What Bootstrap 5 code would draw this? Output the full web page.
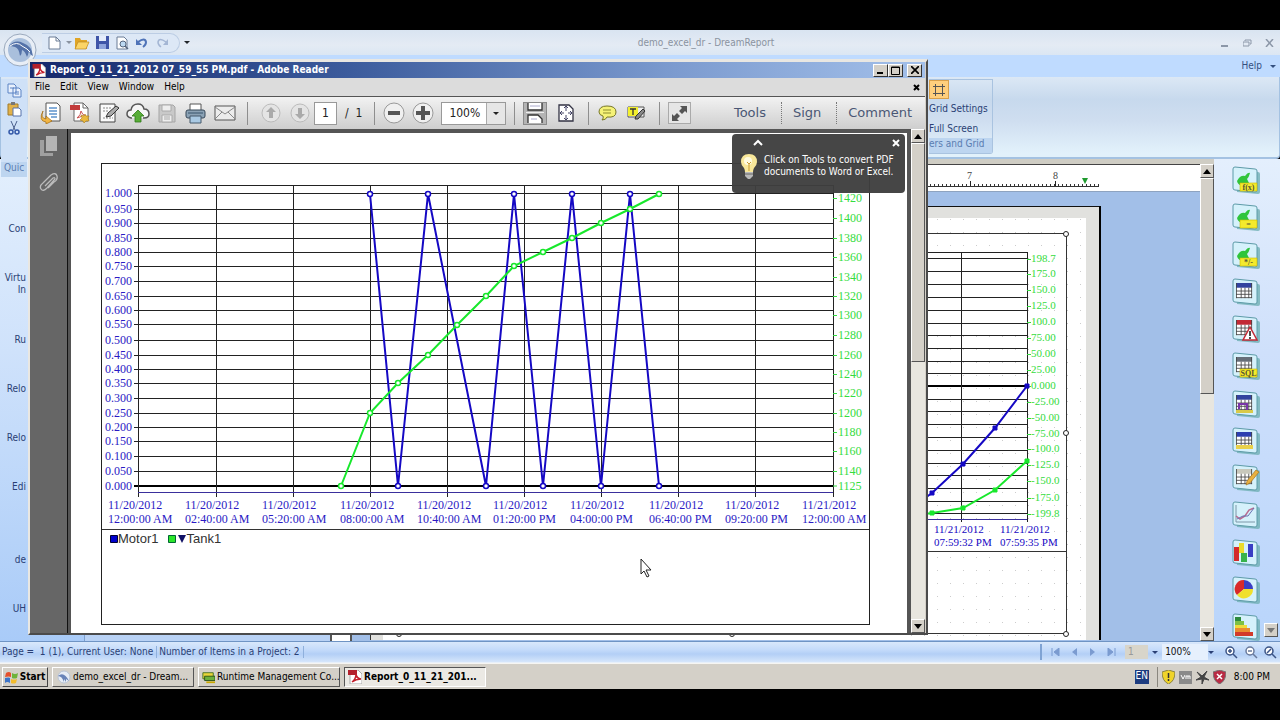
<!DOCTYPE html>
<html lang="en">
<head>
<meta charset="utf-8">
<meta name="viewport" content="width=device-width, initial-scale=1">
<title>demo_excel_dr - DreamReport</title>
<link rel="stylesheet" href="https://cdn.jsdelivr.net/npm/bootstrap@5.3.0/dist/css/bootstrap.min.css">
<style>
body{background:#000;font-family:"DejaVu Sans Condensed","DejaVu Sans",sans-serif;font-size:10px;line-height:12px;color:#2a3f74;padding:30px 0 31px;min-height:100vh}
button,input,select{font:inherit;color:inherit}
.bare{border:0;background:none;padding:0;display:inline-flex;align-items:center;justify-content:center}
svg{display:block;flex-shrink:0}
svg text{font-family:"Liberation Serif",serif}
a{color:inherit;text-decoration:none}

/* DreamReport shell */
.app-title{height:25px;background:linear-gradient(#d9e4f1,#e4ebf4 60%,#dbe6f3);color:#8a93a0;padding-left:42px}
.orb{left:3px;top:3px;z-index:1}
.qat{background:#dde8f6;border:1px solid #bccde4;border-left:0;border-radius:0 11px 11px 0;height:20px;width:138px}
.qat button{width:20px}
.app-tabs{height:22px;background:#bfdbff;color:#34507f;padding-right:4px}
.ribbon{height:82px;background:linear-gradient(#dce8f5,#c7d9ed 28%,#cfdef0 55%,#e2f1fb 95%);border:1px solid #a4c2e2;border-width:0 1px 2px;border-radius:0 0 4px 4px}
.ribbon-group{border:1px solid #a9c3e0;border-left:0;border-radius:0 0 3px 0;height:75px;margin-top:2px;white-space:nowrap}
.ribbon-cap{background:#bdd5f0;color:#5a7db0;height:15px}
.ribbon-behind{width:902px}
.left-group{width:26px;background:#cfe1f7;height:98px;margin-top:2px;z-index:1}
.grid-on{background:#ffcf7d;border:1px solid #d9a04a;width:20px;height:19px}

.nav-pane{width:85px;background:linear-gradient(#e3effd,#cfe2fb 40%,#a9cbf8);border-right:1px solid #7ea0cf}
.nav-pane a{width:26px;height:49px;overflow:hidden;white-space:nowrap}
.nav-pane a.two-line{height:70px}
.nav-pane a:last-child{height:auto}
.tree-pane{width:245px;background:#b9d2f5}
.designer{background:#a2bfe8;border-top:5px solid #cfcdc4}
.ruler{height:28px;background:#fff;border-top:1px solid #444;border-bottom:1px solid #8ea3c0}
.vruler{width:22px;background:#fff;border:1px solid #555;border-width:0 2px}
.sheet{margin-top:14px;margin-left:18px;width:731px}
.toolbox{width:67px;background:linear-gradient(#e4effd,#cfe0fb 40%,#b9d5fb)}
.toolbox .tools{padding:7px 0 0 18px}
.sb{width:14px;background:#e8e6df}
.sb-btn{width:14px;height:14px;background:#d4d0c8;border:1px solid;border-color:#fff #555 #555 #fff}
.sb-thumb{background:#d4d0c8;border:1px solid;border-color:#fff #555 #555 #fff}

.status{height:22px;background:linear-gradient(#d9e8fb,#c3dafa 40%,#b3cff6 60%,#d6e6fb);border-top:1px solid #6f94c4;border-bottom:1px solid #e8f0fa}
.status .cell{border-right:1px solid #8fb0dc;padding:0 3px 0 2px;white-space:pre}
.status-nav{width:240px;border-left:2px solid #7fa3d4}
.page-pick{width:24px;height:14px;background:#d8d5ca;color:#999;border:0;padding:0 0 0 3px}
.zoom-pick{width:48px;height:16px;background:#e6f0fd;border:0;color:#111;padding:0 0 0 3px}
select{appearance:none;border-radius:0}
.caret{width:0;height:0;border:3px solid transparent;border-top-color:currentColor;border-bottom:0}

/* Taskbar */
.taskbar{height:26px;background:#d4d0c8;border-top:1px solid #f6f5f2;color:#000;padding:2px 2px 1px}
.task{width:142px;height:20px;border:1px solid;border-color:#fff #555 #555 #fff;background:#d4d0c8;padding:0 3px;white-space:nowrap;text-align:left;display:flex;align-items:center;gap:2px}
.task.on{border-color:#555 #fff #fff #555;background:#ebe9e4;font-weight:700}
.start{width:46px;height:20px;border:1px solid;border-color:#fff #444 #444 #fff;background:#d4d0c8;font-weight:700;padding:0 2px;gap:2px}
.lang{background:#1c3c80;color:#fff;width:14px;height:14px;text-align:center}
.tray{border-left:1px solid #8a877f;height:20px}

/* Reader window */
.reader{left:28px;right:352px;top:29px;z-index:5;background:#d4d0c8;border:2px solid;border-color:#e9e7e2 #4b4b4b #4b4b4b #e9e7e2;border-top-width:3px;padding-right:1px;min-width:640px;color:#000}
.r-title{height:16px;background:linear-gradient(90deg,#15286b,#3c5c9d 36%,#7c9bcf 72%,#a3c0ea);color:#fff;font-weight:700;padding:0 3px 0 2px}
.win-btn{width:15px;height:13px;background:#d4d0c8;border:1px solid;border-color:#fff #333 #333 #fff;padding:0}
.r-menu{height:18px;background:#dcdcdc;padding:0 5px;gap:10px}
.r-tools{height:33px;background:linear-gradient(#f2f2f2,#cecece);border-top:1px solid #555;padding-left:6px;padding-right:13px;color:#222}
.r-tools .ic{width:29px;height:28px}
.vsep{width:1px;height:23px;background:#8e8e8e}
.pg{width:23px;height:23px;border:1px solid #999;background:#fff;text-align:center;padding:0;font-size:12px}
.zm{width:65px;height:23px;border:1px solid #999;background:#fff;font-size:12px;padding:0 0 0 7px;border-radius:0}
.zm-arrow{right:1px;top:1px;width:19px;height:21px;background:#e6e6e6;border-left:1px solid #aaa;pointer-events:none}
.fit{width:24px;height:23px;background:#b4b4b4;border:1px solid #8a8a8a}
.full{width:23px;height:22px;border:1px solid #aaa;background:#e6e6e6}
.panel-link{font-family:"DejaVu Sans",sans-serif;font-size:13px;color:#4a5775;gap:11px}
.dotsep{height:22px;border-left:1px dotted #777}
.r-side{width:38px;background:#666;border-right:1px solid #111;padding-top:7px}
.r-doc{background:#555;padding:4px 4px 0 3px}
.paper{background:#fff;padding:30px 37px 8px 30px}
.frame{border:1px solid #222;width:100%}
.legend-row{height:95px;border-top:1px solid #333;padding:2px 0 0 8px;font-family:"Liberation Sans",sans-serif;font-size:13px;line-height:14px;color:#333}
.tip{right:21px;top:72px;width:173px;height:59px;background:rgba(62,62,62,.96);border-radius:4px;color:#fff;z-index:2;padding:20px 0 0 9px;gap:7px;white-space:nowrap}
.tip-up{left:21px;top:5px}.tip-x{right:5px;top:5px}
.pointer{left:640px;top:528px;z-index:6}
</style>
</head>
<body class="d-flex flex-column">
<svg width="0" height="0" class="position-absolute" aria-hidden="true">
  <symbol id="tile" viewBox="0 0 28 28"><path d="M4 4 26 6q2 0 2 2v18q0 2-2 2L5 26z" fill="#6fb0b4" opacity=".8"/><path d="M1 3q0-2 2-2l20 2q2 0 2 2v19q0 2-2 2L3 24q-2 0-2-2z" fill="#d5f1fb" stroke="#5d9ba8"/></symbol>
  <symbol id="grid" viewBox="0 0 18 18"><path d="M0 0h17v16H0z" fill="#fff"/><path d="M0 0h17v5H0z" fill="currentColor"/><path d="M.5 0v16M5.500 5v11M9.500 5v11M13.500 5v11M16.500 0v16M0 8.500h17M0 12h17M0 15.500h17" stroke="#444" stroke-width=".9" fill="none"/></symbol>
  <symbol id="leaf" viewBox="0 0 28 28"><path d="M5 15q3-6 8-5 3-4 5-3-1 4-3 6l2 4-6 2q-5 1-6-4z" fill="#2fc53c"/></symbol>
  <symbol id="pdf" viewBox="0 0 14 14"><path d="M2 0h8l4 4v10H2z" fill="#fff" stroke="#a9a9a9"/><path d="M0 0h9v5H0z" fill="#b3202c"/><path d="M4 12q4-3 4-8 1 5 5 5-5 0-9 3z" fill="none" stroke="#c3202c" stroke-width="1.500"/></symbol>
  <symbol id="up" viewBox="0 0 8 5"><path d="M0 5h8L4 0z"/></symbol>
  <symbol id="down" viewBox="0 0 8 5"><path d="M0 0h8L4 5z"/></symbol>
</svg>

<main class="position-relative d-flex flex-column flex-grow-1">
  <button class="bare orb position-absolute" aria-label="Application menu"><svg width="36" height="36" viewBox="0 0 36 36"><circle cx="17" cy="17" r="16" fill="#e8eef6" stroke="#9aa9bd"/><circle cx="17" cy="17" r="12" fill="#a9bfdc"/><path d="M6 13q6-7 14-3 9 3 10 13-3-1-4-5-1 4-2 6-2-6-5-7 0 4-2 6-1-8-5-9-3-1-6-1z" fill="#5472a8"/><path d="M7 13q7-5 12 0 6 3 8 6" stroke="#fff" fill="none"/></svg></button>
  <header class="app-title d-flex align-items-center">
    <div class="qat d-flex align-items-center">
      <button class="bare" aria-label="New" style="width:24px"><svg width="13" height="14" viewBox="0 0 13 14"><path d="M1 1h7l4 4v8H1z" fill="#fff" stroke="#6b7c96"/><path d="M8 1v4h4" fill="none" stroke="#6b7c96"/></svg></button>
      <span class="caret"></span>
      <button class="bare" aria-label="Open"><svg width="16" height="14" viewBox="0 0 16 14"><path d="M1 2h5l1 2h6v9H1z" fill="#e0a526"/><path d="M4 6h11l-3 7H1z" fill="#fbd466" stroke="#b98620" stroke-width=".7"/></svg></button>
      <button class="bare" aria-label="Save"><svg width="13" height="13" viewBox="0 0 13 13"><path d="M0 0h13v13H0z" fill="#3f55a8"/><path d="M3 0h7v5H3z" fill="#e5edfb"/><path d="M3 8h7v5H3z" fill="#8fa4dc"/></svg></button>
      <button class="bare" aria-label="Preview"><svg width="13" height="14" viewBox="0 0 13 14"><path d="M1 1h7l3 3v9H1z" fill="#fff" stroke="#6b7c96"/><circle cx="7" cy="8" r="3" fill="#bcd9f2" stroke="#55657d"/><path d="m9 10 3 3" stroke="#55657d" stroke-width="1.500"/></svg></button>
      <button class="bare" aria-label="Undo"><svg width="12" height="11" viewBox="0 0 12 11"><path d="M2 5q7-5 8 0 0 3-3 5" stroke="#4f73b8" stroke-width="2" fill="none"/><path d="M0 2v6h6z" fill="#4f73b8"/></svg></button>
      <button class="bare" aria-label="Redo"><svg width="12" height="11" viewBox="0 0 12 11"><path d="M10 5q-7-5-8 0 0 3 3 5" stroke="#a4b6d4" stroke-width="1.500" fill="none"/><path d="M12 2v6H7z" fill="#a4b6d4"/></svg></button>
    </div>
    <span class="caret ms-1 text-dark"></span>
    <span class="flex-grow-1 text-center ps-2">demo_excel_dr - DreamReport</span>
    <button class="bare" aria-label="Minimize" style="width:22px"><svg width="8" height="8"><path d="M0 7h7" stroke="#8c97a8" stroke-width="2"/></svg></button>
    <button class="bare" aria-label="Restore" style="width:22px"><svg width="9" height="8"><path d="M2 2V1h6v4H7M0 3h6v4H0z" fill="none" stroke="#8c97a8"/></svg></button>
    <button class="bare" aria-label="Close" style="width:22px"><svg width="9" height="8"><path d="m1 0 7 8M8 0 1 8" stroke="#8c97a8" stroke-width="1.500"/></svg></button>
  </header>
  <nav class="app-tabs d-flex align-items-center justify-content-end gap-2"><a href="#">Help</a><span class="caret"></span></nav>
  <div class="ribbon d-flex">
    <div class="left-group d-flex flex-column align-items-center gap-1 pt-1 position-relative flex-shrink-0">
      <button class="bare" aria-label="Copy"><svg width="15" height="15" viewBox="0 0 15 15"><path d="M1 1h6l2 2v7H1zM6 5h6l2 2v7H6z" fill="#e8f0fc" stroke="#5b83c4"/><path d="M3 5h4M8 9h4M8 11h4" stroke="#5b83c4"/></svg></button>
      <button class="bare" aria-label="Paste"><svg width="15" height="15" viewBox="0 0 15 15"><path d="M1 2h10v11H1z" fill="#e2b24a" stroke="#a07a2a"/><path d="M4 0h4v3H4z" fill="#777"/><path d="M6 6h6l2 2v6H6z" fill="#fff" stroke="#5673ab"/></svg></button>
      <button class="bare" aria-label="Cut"><svg width="12" height="14" viewBox="0 0 12 14"><path d="m3 0 4 9M9 0 5 9" stroke="#4a5f8c"/><circle cx="3" cy="11" r="2" fill="none" stroke="#3358a8" stroke-width="1.500"/><circle cx="9" cy="11" r="2" fill="none" stroke="#3358a8" stroke-width="1.500"/></svg></button>
      <span class="ribbon-cap mt-auto w-100 text-center">Quic</span>
    </div>
    <div class="ribbon-behind flex-shrink-0"></div>
    <div class="ribbon-group d-flex flex-column align-items-start flex-shrink-0">
      <button class="bare grid-on" aria-label="Show grid"><svg width="12" height="12" viewBox="0 0 12 12"><path d="M2.500 0v12M9.500 0v12M0 2.500h12M0 9.500h12" stroke="#555"/></svg></button>
      <button class="bare mt-1">Grid Settings</button>
      <button class="bare mt-2">Full Screen</button>
      <span class="ribbon-cap mt-auto w-100 pe-2">ers and Grid</span>
    </div>
  </div>

  <div class="d-flex flex-grow-1">
    <nav class="nav-pane d-flex flex-column pt-5 flex-shrink-0">
      <a href="#" class="text-end pt-3">Con</a>
      <a href="#" class="text-end two-line pt-3">Virtu<br>In</a>
      <a href="#" class="text-end pt-2">Ru</a>
      <a href="#" class="text-end pt-2">Relo</a>
      <a href="#" class="text-end pt-2">Relo</a>
      <a href="#" class="text-end pt-2">Edi</a>
      <a href="#" class="text-end pt-2 mt-4">de</a>
      <a href="#" class="text-end pt-2">UH</a>
    </nav>
    <div class="tree-pane flex-shrink-0"></div>
    <section class="designer flex-grow-1 d-flex">
      <div class="flex-grow-1 d-flex flex-column">
        <div class="ruler"><svg id="ruler" width="870" height="26" viewBox="330 166 870 26"></svg></div>
        <div class="d-flex flex-grow-1">
          <div class="vruler flex-shrink-0"></div>
          <div class="sheet"><svg id="design" width="731" height="434" viewBox="370 206 731 434" role="img" aria-label="Report page in design view"></svg></div>
        </div>
      </div>
      <div class="sb d-flex flex-column flex-shrink-0">
        <button class="bare sb-btn" aria-label="Scroll up"><svg width="8" height="5"><use href="#up"/></svg></button>
        <div class="sb-thumb" style="height:216px"></div>
        <button class="bare sb-btn mt-auto" aria-label="Scroll down"><svg width="8" height="5"><use href="#down"/></svg></button>
      </div>
    </section>
    <aside class="toolbox d-flex flex-shrink-0">
      <div class="tools d-flex flex-column justify-content-between" id="tools"></div>
      <button class="bare sb-btn mb-1 ms-1 align-self-end" aria-label="More tools"><svg width="8" height="5"><use href="#down" fill="#777"/></svg></button>
    </aside>
  </div>

  <footer class="status d-flex align-items-center">
    <span class="cell">Page =  1 (1), Current User: None</span>
    <span class="cell">Number of Items in a Project: 2</span>
    <div class="status-nav ms-auto d-flex align-items-center ps-1">
      <button class="bare" aria-label="First" style="width:20px"><svg width="9" height="8"><path d="M1 0v8M8 0v8L3 4z" stroke="#7b9bd0" fill="#7b9bd0"/></svg></button>
      <button class="bare" aria-label="Previous" style="width:20px"><svg width="6" height="8"><path d="M5 0v8L0 4z" fill="#7b9bd0"/></svg></button>
      <button class="bare" aria-label="Next" style="width:18px"><svg width="6" height="8"><path d="M0 0v8l5-4z" fill="#7b9bd0"/></svg></button>
      <button class="bare" aria-label="Last" style="width:20px"><svg width="9" height="8"><path d="M8 0v8M1 0v8l5-4z" stroke="#7b9bd0" fill="#7b9bd0"/></svg></button>
      <select class="page-pick ms-1" aria-label="Page number"><option>1</option></select>
      <span class="caret ms-1 me-1"></span>
      <select class="zoom-pick" aria-label="Design zoom"><option>100%</option></select>
      <span class="caret me-2"></span>
      <button class="bare" aria-label="Zoom in" style="width:20px"><svg width="13" height="13"><circle cx="5" cy="5" r="4" fill="#fff" stroke="#3b5486" stroke-width="1.500"/><path d="M3 5h4M5 3v4M8 8l4 4" stroke="#3b5486" stroke-width="1.500"/></svg></button>
      <button class="bare" aria-label="Zoom out" style="width:20px"><svg width="13" height="13"><circle cx="5" cy="5" r="4" fill="#fff" stroke="#68799c" stroke-width="1.500"/><path d="M3 5h4M8 8l4 4" stroke="#68799c" stroke-width="1.500"/></svg></button>
      <button class="bare" aria-label="Fit" style="width:20px"><svg width="13" height="13"><circle cx="5" cy="5" r="4" fill="#fff" stroke="#3b5486" stroke-width="1.500"/><path d="m3 7 4-4M8 8l4 4" stroke="#3b5486" stroke-width="1.500"/></svg></button>
    </div>
  </footer>

  <section class="reader position-absolute">
    <div class="r-title d-flex align-items-center">
      <svg width="14" height="13"><use href="#pdf"/></svg><span class="ps-1">Report_0_11_21_2012 07_59_55 PM.pdf - Adobe Reader</span>
      <button class="bare win-btn ms-auto" aria-label="Minimize"><svg width="8" height="8"><path d="M0 7h6" stroke="#000" stroke-width="2"/></svg></button>
      <button class="bare win-btn" aria-label="Maximize"><svg width="9" height="9"><path d="M.5 1h8v7.500h-8zM0 1.500h9" stroke="#000" fill="none"/></svg></button>
      <button class="bare win-btn ms-1" aria-label="Close"><svg width="8" height="8"><path d="m0 0 8 8M8 0 0 8" stroke="#000" stroke-width="1.700"/></svg></button>
    </div>
    <nav class="r-menu d-flex align-items-center">
      <a href="#">File</a><a href="#">Edit</a><a href="#">View</a><a href="#">Window</a><a href="#">Help</a>
      <button class="bare ms-auto" aria-label="Close document"><svg width="7" height="7"><path d="m1 1 5 5M6 1 1 6" stroke="#000" stroke-width="2"/></svg></button>
    </nav>
    <div class="r-tools d-flex align-items-center">
      <button class="bare ic" aria-label="Open"><svg width="22" height="22" viewBox="0 0 22 22"><path d="M6 1h11l3 3v15H6z" fill="#fff" stroke="#555"/><path d="M9 6h8M9 9h8M9 12h8M11 15h6" stroke="#5e93cb" stroke-width="1.500"/><path d="M3 9q-3 7 3 8v-3l6 5-6 3v-2Q-2 19 3 9z" fill="#f2b544" stroke="#a06a10" stroke-width=".7"/></svg></button>
      <button class="bare ic" aria-label="Create PDF"><svg width="22" height="22" viewBox="0 0 22 22"><path d="M5 1h9l5 5v13H5z" fill="#fff" stroke="#666"/><path d="M14 1v5h5" fill="none" stroke="#666"/><path d="M1 3h10v5H1z" fill="#c23b3b"/><path d="M8 16q4-3 4-7 1 4 5 5-5 0-9 2z" stroke="#c55" fill="none"/><path d="m16 12 1 2 3 0-1 2 1 3-3 0-2 2-1-2-3-1 2-2-1-3 3 1z" fill="#eab93e" stroke="#a87a1c" stroke-width=".6"/></svg></button>
      <button class="bare ic" aria-label="Edit"><svg width="22" height="22" viewBox="0 0 22 22"><path d="M2 2h15v18H2z" fill="#fafafa" stroke="#444"/><path d="M5 6h8M5 9h6M5 16h10" stroke="#888" stroke-dasharray="2 1"/><path d="m8 15 2-4L18 4l3 2-8 8z" fill="#aaa" stroke="#333"/></svg></button>
      <button class="bare ic" aria-label="Upload"><svg width="24" height="22" viewBox="0 0 24 22"><path d="M6 16H5q-4-1-4-4 0-4 4-4 1-6 7-6 5 0 6 5 5 0 5 5 0 4-5 4h-1" fill="#f6f6f6" stroke="#555" stroke-width="1.500"/><path d="m12 8 6 6h-3v6H9v-6H6z" fill="#58ad38" stroke="#2e7a18" stroke-width=".8"/></svg></button>
      <button class="bare ic" aria-label="Save a copy"><svg width="18" height="19" viewBox="0 0 18 19"><path d="M1 1h14l2 2v15H1z" fill="#c9c9c9" stroke="#a5a5a5"/><path d="M4 1h9v6H4zM4 11h10v7H4z" fill="#eee" stroke="#aaa"/><path d="M6 13h6M6 15h6" stroke="#aaa"/></svg></button>
      <button class="bare ic" aria-label="Print"><svg width="21" height="21" viewBox="0 0 21 21"><path d="M5 1h11v7H5z" fill="#fff" stroke="#555"/><rect x="1" y="7" width="19" height="8" rx="2" fill="#8ba2b5" stroke="#374859"/><path d="M3 10h15" stroke="#37526b"/><path d="M5 13h11v7H5z" fill="#a9c9e3" stroke="#45596b"/></svg></button>
      <button class="bare ic" aria-label="E-mail"><svg width="22" height="16" viewBox="0 0 22 16"><path d="M1 1h20v14H1z" fill="#ececec" stroke="#555"/><path d="m1 2 10 7L21 2M1 14l7-7M21 14l-7-7" fill="none" stroke="#888"/></svg></button>
      <span class="vsep ms-2 me-2"></span>
      <button class="bare ic" aria-label="Previous page"><svg width="20" height="20" viewBox="0 0 20 20"><circle cx="10" cy="10" r="9" fill="#e4e4e4" stroke="#bbb"/><path d="m10 4 5 5h-3v6H8V9H5z" fill="#aaa"/></svg></button>
      <button class="bare ic" aria-label="Next page"><svg width="20" height="20" viewBox="0 0 20 20"><circle cx="10" cy="10" r="9" fill="#e4e4e4" stroke="#bbb"/><path d="m10 16 5-5h-3V5H8v6H5z" fill="#aaa"/></svg></button>
      <input class="pg" aria-label="Page" value="1"><span class="ms-2 me-2" style="font-size:12px">/&nbsp; 1</span>
      <span class="vsep ms-1 me-1"></span>
      <button class="bare ic" aria-label="Zoom out"><svg width="22" height="22" viewBox="0 0 22 22"><circle cx="11" cy="11" r="10" fill="#f0f0f0" stroke="#999"/><path d="M5 11h12" stroke="#555" stroke-width="4"/></svg></button>
      <button class="bare ic" aria-label="Zoom in"><svg width="22" height="22" viewBox="0 0 22 22"><circle cx="11" cy="11" r="10" fill="#f0f0f0" stroke="#999"/><path d="M4 11h14M11 4v14" stroke="#555" stroke-width="4"/></svg></button>
      <div class="position-relative ms-1"><select class="zm d-block" aria-label="Zoom level"><option>100%</option></select><span class="zm-arrow position-absolute d-flex align-items-center justify-content-center"><i class="caret"></i></span></div>
      <span class="vsep ms-2 me-2"></span>
      <button class="bare fit" aria-label="Scrolling pages"><svg width="18" height="20" viewBox="0 0 18 20"><path d="M2 0v7h14V0M2 20v-8h10l4 4v4" fill="#fff" stroke="#333" stroke-width="1.300"/><path d="M0 9.500h18" stroke="#eee"/><path d="M4 3h10M5 16h6" stroke="#aac"/></svg></button>
      <button class="bare ic ms-1" aria-label="Fit one page"><svg width="16" height="18" viewBox="0 0 16 18"><path d="M1 1h10l4 4v12H1z" fill="#fff" stroke="#334" stroke-width="1.300"/><path d="M8 2v5M6 4l2-2 2 2M8 16v-5M6 14l2 2 2-2M2 9h4M4 7 2 9l2 2M14 9h-4M12 7l2 2-2 2" fill="none" stroke="#446"/></svg></button>
      <span class="vsep ms-2 me-1"></span>
      <button class="bare ic" aria-label="Add note"><svg width="19" height="16" viewBox="0 0 19 16"><path d="M9 1q9 0 9 6t-9 5q-1 3-5 3 2-2 1-4-4-1-4-4 0-6 8-6z" fill="#f5f277" stroke="#777728"/><path d="M5 5h8M5 8h8" stroke="#8d8d30"/></svg></button>
      <button class="bare ic" aria-label="Highlight text"><svg width="19" height="17" viewBox="0 0 19 17"><path d="M1 2h16v10H1z" fill="#eee" stroke="#555"/><path d="M1 2h10v9H1z" fill="#f3f02e"/><path d="M3 4h6M6 4v6" stroke="#333" stroke-width="1.300"/><path d="m8 14 1-3 7-7 2 2-7 8z" fill="#888" stroke="#333"/></svg></button>
      <span class="vsep ms-2 me-2"></span>
      <button class="bare full" aria-label="Read mode"><svg width="17" height="17" viewBox="0 0 17 17"><path d="M9 1h7v7l-2-2-3 3-3-3 3-3zM8 16H1V9l2 2 3-3 3 3-3 3z" fill="#555"/></svg></button>
      <div class="ms-auto d-flex align-items-center panel-link">
        <button class="bare me-1">Tools</button><span class="dotsep"></span><button class="bare me-1">Sign</button><span class="dotsep"></span><button class="bare">Comment</button>
      </div>
    </div>
    <div class="d-flex">
      <div class="r-side d-flex flex-column align-items-center gap-3">
        <button class="bare" aria-label="Page thumbnails"><svg width="18" height="20" viewBox="0 0 18 20"><path d="M0 4v16h13v-3H4V4z" fill="#a0a0a0"/><path d="M6 0h11v15H6z" fill="#b5b5b5"/></svg></button>
        <button class="bare" aria-label="Attachments"><svg width="20" height="20" viewBox="0 0 20 20"><path d="m6 14 8-8q2-1 2 1l-8 9q-4 4-6 1t2-6l8-8q5-3 6 1t-3 6l-6 6" fill="none" stroke="#bbb" stroke-width="1.300"/></svg></button>
      </div>
      <div class="r-doc flex-grow-1">
        <div class="paper"><div class="frame">
          <svg id="trend" class="w-100 h-auto" viewBox="102 164 767 365" width="767" height="365" role="img" aria-label="Motor1 and Tank1 trend"></svg>
          <div class="legend-row d-flex align-items-start">
            <svg width="8" height="12"><path d="M.5 3.500h7v7h-7z" fill="#00c" stroke="#003"/></svg><span>Motor1</span>
            <svg width="20" height="12" class="ms-2"><path d="M2.500 3.500h7v7h-7z" fill="#2be62b" stroke="#063"/><path d="M12 3h8l-4 8z" fill="#116"/></svg><span>Tank1</span>
          </div>
        </div></div>
      </div>
      <div class="sb d-flex flex-column flex-shrink-0">
        <button class="bare sb-btn" aria-label="Scroll up"><svg width="8" height="5"><use href="#up"/></svg></button>
        <div class="sb-thumb" style="height:219px"></div>
        <button class="bare sb-btn mt-auto" aria-label="Scroll down"><svg width="8" height="5"><use href="#down"/></svg></button>
      </div>
    </div>
    <div class="tip position-absolute d-flex align-items-start">
      <svg class="tip-up position-absolute" width="10" height="7"><path d="m1 6 4-4 4 4" fill="none" stroke="#fff" stroke-width="2"/></svg>
      <button class="bare tip-x position-absolute" aria-label="Dismiss"><svg width="8" height="8"><path d="m1 1 6 6M7 1 1 7" stroke="#fff" stroke-width="2"/></svg></button>
      <svg width="16" height="25" viewBox="0 0 16 25"><path d="M8 0q8 0 8 8 0 3-3 6-1 2-1 4H4q0-2-1-4-3-3-3-6 0-8 8-8z" fill="#f8e79a"/><circle cx="7" cy="7" r="4" fill="#fffbe0"/><path d="M8 17v-7l-2-2m2 2 2-2" stroke="#c99a30" fill="none"/><path d="M4 18h8v4l-3 3H7l-3-3z" fill="#b9b9b9"/><path d="M4 20h8" stroke="#666"/></svg>
      <span>Click on Tools to convert PDF<br>documents to Word or Excel.</span>
    </div>
  </section>
  <svg class="pointer position-absolute" width="12" height="20" viewBox="0 0 12 20"><path d="M1 1v15l3-3 3 6 2-1-3-6h5z" fill="#fff" stroke="#222"/></svg>
</main>

<footer class="taskbar d-flex align-items-center gap-1">
  <button class="bare start"><svg width="13" height="13" viewBox="0 0 13 13"><path d="M1 2q3-2 5 0v4Q4 5 0 6z" fill="#e5502c"/><path d="M7 2q3 2 6 0l-1 5q-3 1-5 0z" fill="#6fb33a"/><path d="M0 7q4-1 5 0v5q-3-2-5 0z" fill="#3c74c9"/><path d="M6 8q3 1 6 0l-1 4q-3 1-5 0z" fill="#f2bc2d"/></svg>Start</button>
  <button class="task"><svg width="15" height="15" viewBox="0 0 15 15"><circle cx="8" cy="7" r="6" fill="#e6ecf5" stroke="#b8c4d6"/><path d="M2 6q6-5 11 5l-3-2v3L8 9v3Q6 6 2 6z" fill="#6883b8"/></svg>demo_excel_dr - Dream...</button>
  <button class="task"><svg width="13" height="13" viewBox="0 0 15 15"><path d="M1 2h12v7H1z" fill="#e9d53a" stroke="#3a6b1c"/><path d="M3 6h12v5H3z" fill="#6bb03d" stroke="#264d12"/><path d="M5 13h10" stroke="#caa700" stroke-width="2"/></svg>Runtime Management Co...</button>
  <button class="task on"><svg width="14" height="14"><use href="#pdf"/></svg><span>Report_0_11_21_201...</span></button>
  <span class="lang ms-auto">EN</span>
  <div class="tray d-flex align-items-center gap-1 ps-1 ms-1">
    <svg width="13" height="14" viewBox="0 0 13 14"><path d="M6.500 0 13 2q0 9-6.500 12Q0 11 0 2z" fill="#f0d42a" stroke="#8c8440"/><path d="M6.500 3v5M6.500 9v2" stroke="#333" stroke-width="1.500"/></svg>
    <svg width="13" height="13" viewBox="0 0 13 13"><path d="M0 0h13v13H0z" fill="#8a8a8a"/><path d="m2 4 2 4 2-4M7 8V5h4v3M9 5v3" stroke="#fff" fill="none"/></svg>
    <svg width="13" height="13" viewBox="0 0 13 13"><path d="m1 1 5 4 5-5-3 6 5 3-5-1-2 5V8L0 9l5-3z" fill="#444" stroke="#444"/></svg>
    <svg width="13" height="14" viewBox="0 0 13 14"><path d="M6.500 0 13 2q0 9-6.500 12Q0 11 0 2z" fill="#b92c44" stroke="#777"/><path d="m4 4 5 5M9 4 4 9" stroke="#fff" stroke-width="1.500"/></svg>
    <span class="ms-1 me-2">8:00 PM</span>
  </div>
</footer>

<script>
const ln=(x1,y1,x2,y2,c='#222',w=1)=>`<path d="M${x1} ${y1}L${x2} ${y2}" stroke="${c}" stroke-width="${w}"/>`;
const tx=(x,y,s,c,f=12)=>`<text x="${x}" y="${y}" font-size="${f}" fill="${c}">${s}</text>`;
const poly=(p,c)=>`<path d="M${p.map(q=>q.join(' ')).join('L')}" fill="none" stroke="${c}" stroke-width="2"/>`;
const BLUE='#1508c4', GREEN='#18e82c', LAB='#2a1ac4', GLAB='#35dc40';

// PDF trend chart
const rows=[193,209,223,238,252,266,281,296,310,324,340,355,369,383,398,413,427,441,456,471,486];
const cols=[138,216,293,370,447,524,601,678,755,833];
let s=ln(138,185.5,833,185.5);
rows.forEach((y,i)=>{s+=(i==20?ln(134,486,833,486,'#000',2):ln(134,y+.5,833,y+.5))+tx(105,y+4,(1-i*.05).toFixed(3),LAB)});
const hours=['12:00:00 AM','02:40:00 AM','05:20:00 AM','08:00:00 AM','10:40:00 AM','01:20:00 PM','04:00:00 PM','06:40:00 PM','09:20:00 PM','12:00:00 AM'];
const lx=[108,185,262,340,417,493,570,649,725,802];
cols.forEach((x,i)=>{s+=ln(x+.5,185,x+.5,497)+tx(lx[i],509,i==9?'11/21/2012':'11/20/2012',LAB)+tx(lx[i],523,hours[i],LAB)});
s+=ln(138,492.5,833,492.5,'#3a2f9c');
[198,218,238,257,277,296,315,335,355,374,393,413,432,451,471].forEach((y,i)=>{s+=ln(833,y+.5,837,y+.5,GLAB)+tx(838,y+4,1420-20*i,GLAB)});
s+=ln(833,486,837,486,GLAB)+tx(838,490,1125,GLAB);
const motor=[370,398,428,486,514,543,572,601,630,659].map((x,i)=>[x,i%2?486:194]);
const tank=[[341,486],[370,413],[398,383],[428,355],[457,325],[486,296],[514,266],[543,252],[572,238],[601,223],[630,209],[659,194]];
const dots=(p,c)=>p.map(q=>`<circle cx="${q[0]}" cy="${q[1]}" r="2.500" fill="#fff" stroke="${c}" stroke-width="1.500"/>`).join('');
s+=poly(motor,BLUE)+dots(motor,BLUE)+poly(tank,GREEN)+dots(tank,GREEN);
document.getElementById('trend').innerHTML=s;

// Design view page
let d='<path d="M370 206h731v434H370z" fill="#e1e1de"/><path d="M383 218h703v422H383z" fill="#fff"/>'+ln(370,206.5,1101,206.5,'#111')+ln(1100,206,1100,640,'#000',2)+ln(370.5,206,370.5,640,'#333');
for(let y=219;y<640;y+=13)for(let x=1080;x>900;x-=13)d+=`<path d="M${x} ${y}h1v1h-1z" fill="#ccc"/>`;
d+='<path d="M399.500 233.500h667v400h-667zM399 551.500h667" fill="none" stroke="#333"/>';
d+=ln(900,252.5,1027,252.5);
[258,271,284,297,310,323,335,348,361,373,386,399,411,424,437,450,463,475,488,501,513].forEach((y,i)=>{d+=i==10?ln(900,386,1027,386,'#000',2):ln(900,y+.5,1027,y+.5)});
d+=ln(961.5,252,961.5,522)+ln(1027.5,252,1027.5,522)+ln(900,519.5,1027,519.5,'#3a2f9c');
[[259,'198.7'],[274,'175.0'],[290,'150.0'],[306,'125.0'],[322,'100.0'],[338,'75.00'],[354,'50.00'],[370,'25.00'],[386,'0.000'],[402,'-25.00'],[418,'-50.00'],[434,'-75.00'],[449,'-100.0'],[465,'-125.0'],[481,'-150.0'],[498,'-175.0'],[514,'-199.8']].forEach(a=>{d+=ln(1027,a[0]+.5,1031,a[0]+.5,GLAB)+tx(1031,a[0]+3,a[1],GLAB,11)});
[[934,'07:59:32 PM'],[1000,'07:59:35 PM']].forEach(a=>{d+=tx(a[0],533,'11/21/2012',BLUE,11)+tx(a[0],546,a[1],BLUE,11)});
const sq=(p,c)=>p.map(q=>`<path d="M${q[0]-2} ${q[1]-2}h4v4h-4z" fill="${c}" stroke="${c}"/>`).join('');
const b2=[[925,498],[932,493],[963,464],[995,428],[1027,386]],g2=[[925,514],[932,513],[963,508],[995,490],[1027,461]];
d+=poly(b2,BLUE)+sq(b2,BLUE)+poly(g2,GREEN)+sq(g2,GREEN);
[[1066,234],[1066,433],[1066,634],[732,634],[399,634]].forEach(a=>{d+=`<circle cx="${a[0]}" cy="${a[1]}" r="2.500" fill="#fff" stroke="#222"/>`});
document.getElementById('design').innerHTML=d;

// Ruler
let r=ln(360,187.5,1099,187.5,'#333');
for(let x=1098;x>900;x-=4)r+=ln(x+.5,185,x+.5,187,'#333');
r+=ln(970.5,182,970.5,187)+ln(1055.5,182,1055.5,187)+tx(967,180,'7','#444',10)+tx(1053,180,'8','#444',10)+'<path d="M1082 179h6l-3 6z" fill="#1f9a2e"/>';
document.getElementById('ruler').innerHTML=r;

// Toolbox
const g=c=>`<svg x="4" y="5" width="17" height="17" color="${c}"><use href="#grid"/></svg>`;
const tag=t=>`<path d="M8 17h17v8H8z" fill="#f4ea2c" stroke="#c9b800" stroke-width=".6"/><text x="16.500" y="24" font-size="8" text-anchor="middle" font-weight="700" fill="#553">${t}</text>`;
const items=[
['Expression','<use href="#leaf"/>'+tag('f(x)')],['Logic','<use href="#leaf"/>'+tag('=')],['Arithmetic','<use href="#leaf"/>'+tag('*/-')],
['Table',g('#33439f')],['Alarm table',g('#c22a35')+'<path d="m18 12 7 13H11z" fill="#fff" stroke="#c22a35" stroke-width="1.500"/><path d="M18 16v5M18 22v2" stroke="#111" stroke-width="1.500"/>'],
['SQL table',g('#666e78')+tag('SQL')],['Step table',g('#33439f')+'<path d="M7 19v-5h8v6" fill="none" stroke="#7a36a8" stroke-width="2"/><path d="M4 20h17v3H4z" fill="#d9c948"/>'],
['Summary table',g('#2c3fb0')+'<path d="M4 18h17v4H4z" fill="#e9d14a"/>'],['Edit table',g('#c8c8bc')+'<path d="m14 21 1-4 9-11 3 2-9 11z" fill="#e9b040" stroke="#a8761c" stroke-width=".7"/>'],
['Line chart','<path d="M4 4v17h19" stroke="#7c97a8" fill="none"/><path d="m4 15 4 3 5-3 4-6 5-2" stroke="#b86b90" fill="none" stroke-width="1.500"/><path d="m5 18 6-3 5 0 6-8" stroke="#6a72b0" fill="none"/>'],
['Bar chart','<path d="M2 8h5v14H2z" fill="#d42a2a"/><path d="M7 4h5v10H7z" fill="#eadb2c"/><path d="M9 14h6v9H9z" fill="#37b24a"/><path d="M16 5h5v13h-5z" fill="#3a3fc4"/>'],
['Pie chart','<path d="M12 13V4a9 9 0 0 0-7 15z" fill="#d82a2a"/><path d="M12 13V4a9 9 0 0 1 9 9z" fill="#3a3fc4"/><path d="M12 13h9a9 9 0 0 1-16 6z" fill="#f0e02c"/>'],
['Energy chart','<path d="M3 4h6v4H3z" fill="#2d8a3c"/><path d="M3 8h9v4H3z" fill="#7cc046"/><path d="M3 12h12v3H3z" fill="#eedb3a"/><path d="M3 15h15v4H3z" fill="#e98c30"/><path d="M3 19h18v4H3z" fill="#d23a2a"/>']];
document.getElementById('tools').innerHTML=items.map(i=>`<button class="bare" aria-label="${i[0]}"><svg width="28" height="28" viewBox="0 0 28 28"><use href="#tile"/>${i[1]}</svg></button>`).join('');
</script>
<script src="https://cdn.jsdelivr.net/npm/bootstrap@5.3.0/dist/js/bootstrap.bundle.min.js"></script>
</body>
</html>
